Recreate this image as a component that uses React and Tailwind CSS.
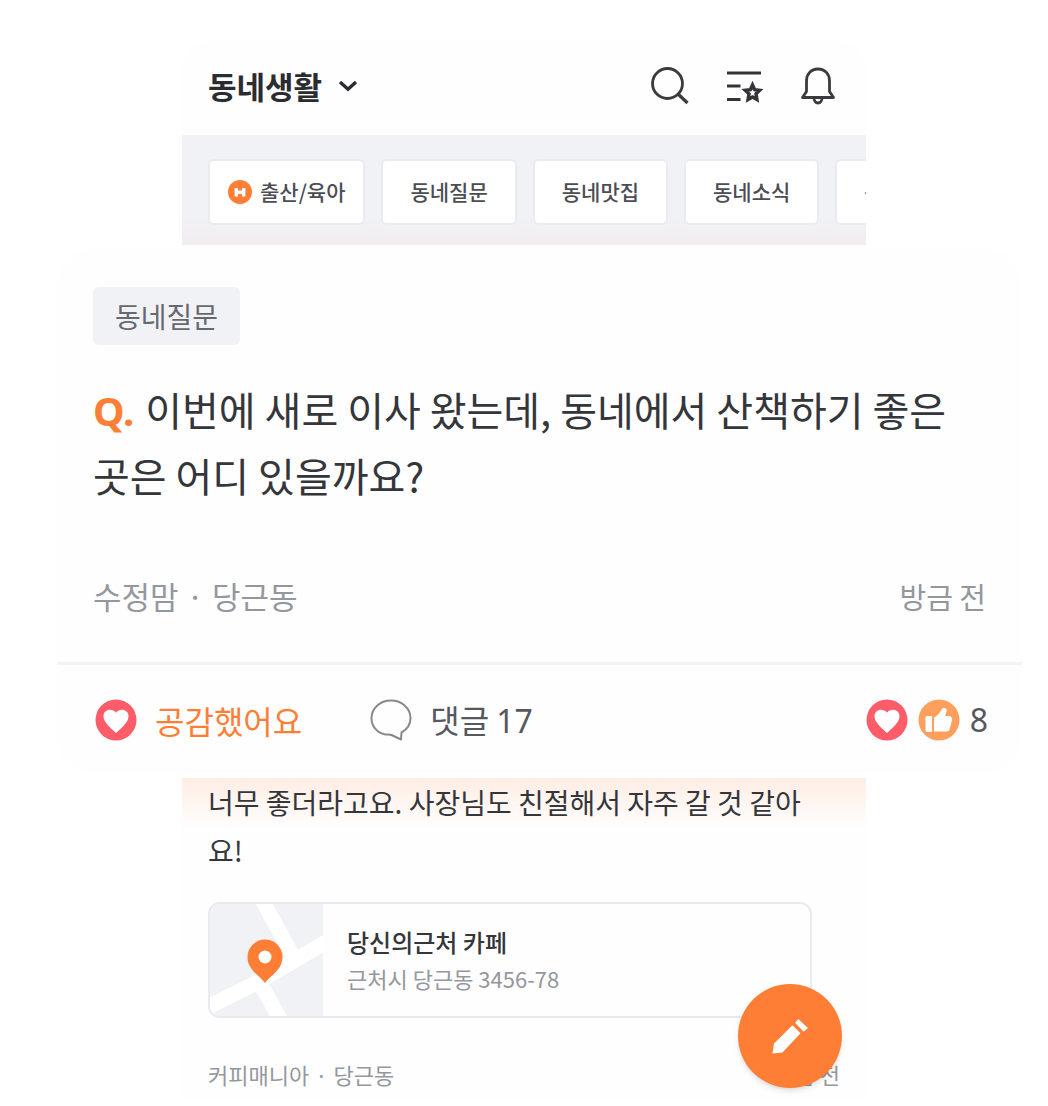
const chips = ["동네질문", "동네맛집", "동네소식", "동네사진"];

function ChevronIcon() {
  return (
    <svg viewBox="0 0 20 14" className="h-3.5 w-5" fill="none" stroke="#2b2c30" strokeWidth="3.4" aria-hidden="true">
      <path d="M2 3l8 7.2L18 3" />
    </svg>
  );
}

function SearchIcon() {
  return (
    <svg viewBox="0 0 40 40" className="size-10" fill="none" stroke="#3a3b3f" strokeWidth="2.8" aria-hidden="true">
      <circle cx="17.500" cy="17.5" r="15" />
      <path d="M28 28l9.500 9" strokeWidth="3.200" />
    </svg>
  );
}

function ListStarIcon() {
  return (
    <svg viewBox="0 0 36 34" className="h-[34px] w-9" fill="none" stroke="#333438" strokeWidth="3.2" aria-hidden="true">
      <path d="M0 4h34M0 17h13.5M0 30.500h13.5" />
      <path d="M25.500 16l2.100 4.700 5.100.6-3.700 3.500.9 5.700-4.400-2.500-4.400 2.500.9-5.700-3.700-3.500 5.100-.6z" strokeWidth="3.500" />
    </svg>
  );
}

function BellIcon() {
  return (
    <svg viewBox="0 0 36 40" className="h-10 w-9" fill="none" stroke="#3a3b3f" strokeWidth="2.800" strokeLinejoin="round" aria-hidden="true">
      <path d="M18 3C11 3 6.500 8 6.500 15v10.500L2.500 31.500h31l-4-6V15C29.500 8 25 3 18 3z" />
      <path d="M14 32a4 5 0 0 0 8 0" />
    </svg>
  );
}

function HotIcon() {
  return (
    <svg viewBox="0 0 24 24" className="size-6" aria-hidden="true">
      <circle cx="12" cy="12" r="12" fill="#ff7e36" />
      <path d="M8.300 8v8.500M15.700 8v8.500M8.300 12.250h7.400" stroke="#fff" strokeWidth="3.400" />
    </svg>
  );
}

function HeartIcon() {
  return (
    <svg viewBox="0 0 42 42" className="size-[42px]" aria-hidden="true">
      <circle cx="21" cy="21" r="20.500" fill="#ff5c6a" />
      <path d="M21 34C18 31 8.500 24 8.500 17.500c0-7.500 9-8.500 12.500-3.800 3.500-4.700 12.500-3.700 12.500 3.800C33.500 24 24 31 21 34z" fill="#fff" />
    </svg>
  );
}

function ThumbIcon() {
  return (
    <svg viewBox="0 0 42 42" className="size-[42px]" aria-hidden="true">
      <circle cx="21" cy="21" r="20.500" fill="#ff9f5e" />
      <path
        d="M9 17h5v16H9a1.500 1.500 0 0 1-1.500-1.500v-13A1.500 1.500 0 0 1 9 17zM16 18.500c3.500-1.800 5.800-4.700 7.800-8.300 1.300-2.300 5.200-1.300 4.900 1.300-.3 2-.9 3.800-1.700 5.500h3.800c2.600 0 3.800 1.800 3.200 4.100l-2 8.200c-.5 2.100-1.800 3.200-3.900 3.200H16z"
        fill="#fff"
      />
    </svg>
  );
}

function CommentIcon() {
  return (
    <svg viewBox="0 0 42 42" className="size-[42px]" fill="none" stroke="#85888e" strokeWidth="2" strokeLinejoin="round" aria-hidden="true">
      <path d="M21 1.500C10 1.500 1.500 9.500 1.500 19c0 8 5 14.500 13 16.300 2.500.5 5-.3 7 .7L31 40.500l.5-7C37 30.500 40.500 25.500 40.500 19 40.500 9.500 32 1.500 21 1.500z" />
    </svg>
  );
}

function MapThumbnail() {
  return (
    <svg viewBox="0 0 113 112" className="h-28 w-[113px] shrink-0" aria-hidden="true">
      <rect width="113" height="112" fill="#f1f2f6" />
      <g stroke="#fff" strokeWidth="15" fill="none">
        <path d="M-4 104L48 78L116 38" />
        <path d="M52 -4L84 54M48 76L72 118" />
      </g>
      <path d="M55 79C50 72 37.500 66 37.500 53a17.500 17.500 0 0 1 35 0C72.500 66 60 72 55 79z" fill="#ff7e36" />
      <circle cx="55" cy="53" r="6.500" fill="#fff" />
    </svg>
  );
}

function PencilIcon() {
  return (
    <svg viewBox="0 0 38 38" className="size-[38px]" fill="#fff" aria-hidden="true">
      <path d="M1.500 36.500l1.500-10L21.500 8.300l8 8L11.500 35.500z" />
      <path d="M24 5.700l3.300-3.700 9.700 9-4.300 3.700z" />
    </svg>
  );
}

export default function App() {
  return (
    <main className="min-h-screen bg-white pt-10 font-['Noto_Sans_CJK_KR',sans-serif] text-[#35363a]">
      <section className="mx-[182px] overflow-hidden rounded-t-[32px] bg-[#fefefe]">
        <header className="flex h-[95px] items-center justify-between pr-[30px] pb-1 pl-[26px]">
          <button className="flex items-center gap-4 text-[31px] leading-10 font-bold text-[#2b2c30]">
            동네생활
            <ChevronIcon />
          </button>
          <div className="flex items-center gap-[37px]">
            <button aria-label="검색"><SearchIcon /></button>
            <button aria-label="관심 목록"><ListStarIcon /></button>
            <button aria-label="알림"><BellIcon /></button>
          </div>
        </header>
        <nav className="flex h-[110px] gap-4 overflow-hidden bg-linear-to-b from-[#f1f2f6] from-75% to-[#f2edef] pt-6 pl-[26px]">
          <button className="flex h-[66px] shrink-0 items-center gap-2 rounded-md border-2 border-[#eaebef] bg-white px-[18px] text-[21px] font-medium text-[#4b4d53]">
            <HotIcon />
            출산/육아
          </button>
          {chips.map((chip) => (
            <button key={chip} className="h-[66px] shrink-0 rounded-md border-2 border-[#eaebef] bg-white px-[27px] text-[21px] font-medium text-[#4b4d53]">
              {chip}
            </button>
          ))}
        </nav>
      </section>

      <article className="mt-1 mr-[26px] ml-[57px] rounded-[36px] bg-[#fefefe]">
        <div className="px-9 pt-[38px] pb-[42px]">
          <span className="inline-block rounded-md bg-[#f1f2f6] px-[22px] text-[28px] leading-[58px] text-[#67696f]">동네질문</span>
          <h1 className="mt-8 text-[40px] leading-[65px] font-normal break-keep text-[#35363a]">
            <strong className="mr-0.5 font-['Noto_Sans',sans-serif] font-bold text-[#ff7e36]">Q.</strong> 이번에 새로 이사 왔는데, 동네에서 산책하기 좋은 곳은 어디 있을까요?
          </h1>
          <div className="mt-16 flex items-center justify-between leading-12 text-[#94979d]">
            <span className="flex gap-2 text-[31px]">
              <span>수정맘</span>
              <span>·</span>
              <span>당근동</span>
            </span>
            <time className="text-[29px]">방금 전</time>
          </div>
        </div>
        <footer className="flex h-28 items-center border-t-3 border-[#f3f3f5] pr-[34px] pl-[38px] text-[32px] text-[#56585e]">
          <button className="flex items-center gap-[18px] text-[#ff7e36]">
            <HeartIcon />
            공감했어요
          </button>
          <button className="ml-[68px] flex items-center gap-[18px]">
            <CommentIcon />
            <span>
              댓글 <span className="font-['Noto_Sans',sans-serif]">17</span>
            </span>
          </button>
          <div className="ml-auto flex items-center gap-2.5">
            <HeartIcon />
            <ThumbIcon />
            <span className="font-['Noto_Sans',sans-serif]">8</span>
          </div>
        </footer>
      </article>

      <section className="relative mx-[182px] mt-1 bg-[#fefefe] bg-linear-to-b from-[#ffede4] to-[#fefefe] to-[50px] px-[26px]">
        <p className="mr-7 text-[28px] leading-12">너무 좋더라고요. 사장님도 친절해서 자주 갈 것 같아요!</p>
        <a href="#place" className="mt-7 mr-7 flex items-center overflow-hidden rounded-xl border-2 border-[#e9eaed]">
          <MapThumbnail />
          <span className="flex flex-col pl-6 leading-9">
            <strong className="text-2xl leading-9 font-medium">당신의근처 카페</strong>
            <span className="text-[22px] text-[#94979d]">근처시 당근동 3456-78</span>
          </span>
        </a>
        <div className="mt-8 flex items-center justify-between text-[22px] leading-12 text-[#94979d]">
          <span className="flex gap-1.5">
            <span>커피매니아</span>
            <span>·</span>
            <span>당근동</span>
          </span>
          <time>방금 전</time>
        </div>
        <button aria-label="글쓰기" className="absolute right-6 bottom-2.5 flex size-[104px] items-center justify-center rounded-full bg-[#ff7e36] shadow-md">
          <PencilIcon />
        </button>
      </section>
    </main>
  );
}
